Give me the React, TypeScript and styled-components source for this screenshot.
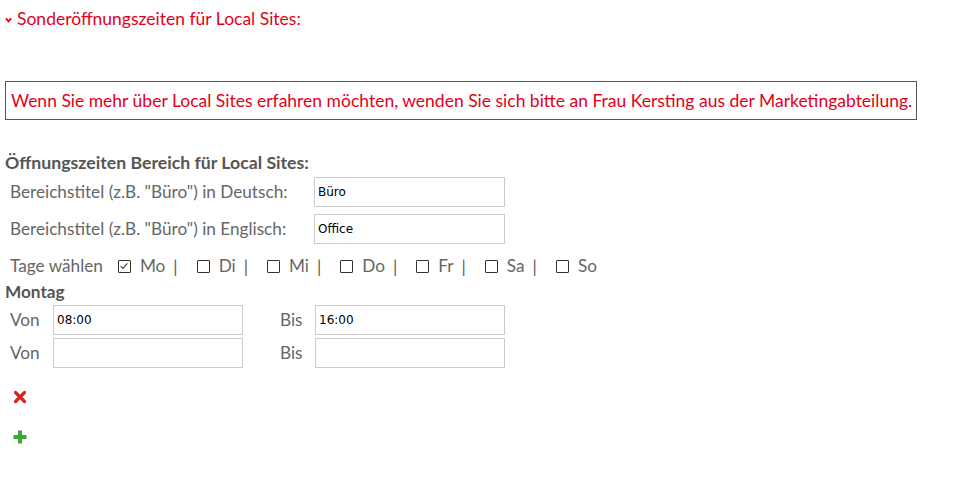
import styled, { createGlobalStyle } from 'styled-components';

const GlobalStyle = createGlobalStyle`
	body {
		margin: 0;
		background: #fff;
		font-family: Lato, 'Open Sans', sans-serif;
	}
`;

const days = [
	{ key: 'Mo', checked: true },
	{ key: 'Di', checked: false },
	{ key: 'Mi', checked: false },
	{ key: 'Do', checked: false },
	{ key: 'Fr', checked: false },
	{ key: 'Sa', checked: false },
	{ key: 'So', checked: false },
];

const App = () => {
	return (
		<>
			<GlobalStyle />
			<Page>
				<Toggle>
					<Chevron viewBox="0 0 8 6">
						<path d="M1 1.2 L4 4.6 L7 1.2" />
					</Chevron>
					Sonderöffnungszeiten für Local Sites:
				</Toggle>

				<Notice>
					Wenn Sie mehr über Local Sites erfahren möchten, wenden Sie sich bitte an Frau Kersting aus der Marketingabteilung.
				</Notice>

				<Heading>Öffnungszeiten Bereich für Local Sites:</Heading>

				<TitleRow $first>
					<Label>Bereichstitel (z.B. "Büro") in Deutsch:</Label>
					<TextInput defaultValue="Büro" />
				</TitleRow>
				<TitleRow>
					<Label>Bereichstitel (z.B. "Büro") in Englisch:</Label>
					<TextInput defaultValue="Office" />
				</TitleRow>

				<DaysRow>
					<DaysLabel>Tage wählen</DaysLabel>
					{days.map((d, i) => (
						<Day key={d.key}>
							<Box>
								{d.checked && (
									<svg viewBox="0 0 12 12" width="10" height="10">
										<path d="M2 6.2 L4.8 9 L10 2.8" fill="none" stroke="#333" strokeWidth="1.3" />
									</svg>
								)}
							</Box>
							<DayName>{d.key}</DayName>
							{i < days.length - 1 && <Pipe>|</Pipe>}
						</Day>
					))}
				</DaysRow>

				<SubHeading>Montag</SubHeading>

				<TimeRow>
					<Label>Von</Label>
					<TimeInput defaultValue="08:00" />
					<BisLabel>Bis</BisLabel>
					<TimeInput defaultValue="16:00" />
				</TimeRow>
				<TimeRow>
					<Label>Von</Label>
					<TimeInput defaultValue="" />
					<BisLabel>Bis</BisLabel>
					<TimeInput defaultValue="" />
				</TimeRow>

				<IconButton aria-label="Entfernen">
					<svg viewBox="0 0 14 14" width="14" height="14">
						<path d="M2.5 2.5 L11.5 11.5 M11.5 2.5 L2.5 11.5" stroke="#d9261c" strokeWidth="3.2" strokeLinecap="round" />
					</svg>
				</IconButton>
				<IconButton aria-label="Hinzufügen" $top={26}>
					<svg viewBox="0 0 14 14" width="14" height="14">
						<path d="M7 0.5 V13.5 M0.5 7 H13.5" stroke="#3aaa35" strokeWidth="4" />
					</svg>
				</IconButton>
			</Page>
		</>
	);
};

const Page = styled.div`
	width: 978px;
	height: 484px;
	box-sizing: border-box;
	padding: 8px 5px 0 5px;
	color: #666;
	font-size: 17.2px;
`;

const Toggle = styled.div`
	display: flex;
	align-items: center;
	gap: 5px;
	color: #e2001a;
	font-size: 17.5px;
	line-height: 22px;
`;

const Chevron = styled.svg`
	width: 7px;
	height: 6px;
	margin-top: 2px;
	& path {
		fill: none;
		stroke: #e2001a;
		stroke-width: 2;
	}
`;

const Notice = styled.div`
	margin-top: 51px;
	width: 912px;
	box-sizing: border-box;
	border: 1px solid #555;
	padding: 0 5px;
	line-height: 37px;
	color: #e2001a;
	font-size: 17.5px;
	white-space: nowrap;
`;

const Heading = styled.div`
	margin-top: 32px;
	font-weight: bold;
	font-size: 17.7px;
	color: #555;
	line-height: 22px;
`;

const SubHeading = styled(Heading)`
	margin-top: 5px;
	font-size: 17.2px;
	line-height: 20px;
`;

const Label = styled.span`
	color: #666;
	line-height: 22px;
`;

const TitleRow = styled.div<{ $first?: boolean }>`
	display: grid;
	grid-template-columns: 304px 191px;
	align-items: center;
	padding-left: 5px;
	margin-top: ${(p) => (p.$first ? 3 : 7)}px;
`;

const inputBase = `
	box-sizing: border-box;
	height: 30px;
	border: 1px solid #ccc;
	padding: 0 3px;
	font-family: 'DejaVu Sans', Verdana, sans-serif;
	font-size: 12px;
	color: #000;
	outline: none;
	background: #fff;
`;

const TextInput = styled.input`
	${inputBase}
	width: 191px;
`;

const TimeInput = styled.input`
	${inputBase}
	width: 190px;
`;

const DaysRow = styled.div`
	display: flex;
	align-items: center;
	padding-left: 5px;
	margin-top: 11px;
	height: 22px;
`;

const DaysLabel = styled(Label)`
	margin-right: 15px;
`;

const Day = styled.span`
	display: inline-flex;
	align-items: center;
`;

const Box = styled.span`
	display: inline-flex;
	align-items: center;
	justify-content: center;
	width: 11px;
	height: 11px;
	border: 1px solid #333;
	border-radius: 1px;
	margin-right: 9px;
`;

const DayName = styled.span`
	color: #666;
	line-height: 22px;
`;

const Pipe = styled.span`
	color: #5a5a5a;
	margin: 0 19px 0 8px;
`;

const TimeRow = styled.div`
	display: grid;
	grid-template-columns: 43px 190px 37px 35px 191px;
	align-items: center;
	padding-left: 5px;
	margin-top: 3px;
	& > ${TimeInput}:nth-of-type(2) {
		grid-column: 5;
	}
`;

const BisLabel = styled(Label)`
	grid-column: 4;
`;

const IconButton = styled.button<{ $top?: number }>`
	display: block;
	border: 0;
	background: none;
	padding: 0;
	margin: ${(p) => p.$top ?? 22}px 0 0 8px;
	width: 14px;
	height: 14px;
	cursor: pointer;
	& svg {
		display: block;
	}
`;

export default App;
